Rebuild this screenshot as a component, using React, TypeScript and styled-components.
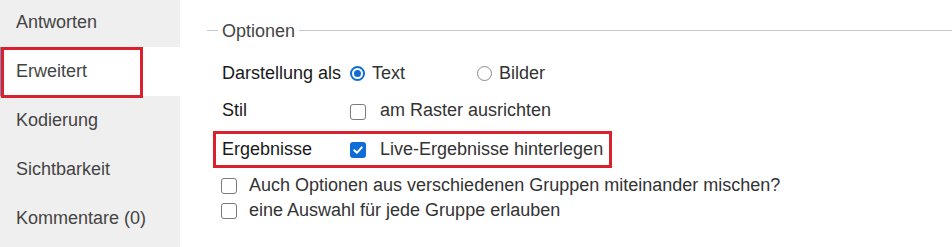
import React from "react";
import styled, { createGlobalStyle } from "styled-components";

const Global = createGlobalStyle`
  html, body { margin: 0; padding: 0; background: #fff; }
  body { font-family: "Liberation Sans", Arial, sans-serif; font-size: 18px; }
`;

const Page = styled.div`
  display: flex;
  width: 952px;
  height: 247px;
  overflow: hidden;
  background: #fff;
`;

const Sidebar = styled.nav`
  width: 180px;
  flex: none;
  background: #efefef;
  display: flex;
  flex-direction: column;
  margin-top: -2px;
  height: 250px;
`;

const NavItem = styled.div<{ $active?: boolean }>`
  position: relative;
  height: 49px;
  display: flex;
  align-items: center;
  padding-left: 16px;
  color: #444;
  font-size: 18px;
  background: ${(p) => (p.$active ? "#fff" : "transparent")};
  ${(p) =>
    p.$active &&
    `
    box-shadow: inset 1px 0 0 #8f86b8;
    &::after {
      content: "";
      position: absolute;
      left: 1px;
      top: 0;
      width: 136px;
      height: 45px;
      border: 3px solid #d8232f;
    }
  `}
`;

const Main = styled.main`
  flex: 1;
  padding: 18px 0 0 27px;
`;

const Fieldset = styled.fieldset`
  margin: 0;
  border: none;
  border-top: 1px solid #c8c8c8;
  padding: 13px 0 0 11px;
  min-width: 0;
`;

const Legend = styled.legend`
  padding: 3px 4px 0;
  color: #444;
  font-size: 18px;
`;

const Body = styled.div`
  padding-left: 4px;
`;

const Row = styled.div<{ $h: number }>`
  display: flex;
  align-items: center;
  height: ${(p) => p.$h}px;
`;

const Highlight = styled.div`
  box-sizing: border-box;
  display: flex;
  align-items: center;
  margin: 3px 0 0 -9px;
  padding-left: 6px;
  width: 399px;
  height: 37px;
  border: 3px solid #d8232f;
`;

const Label = styled.span`
  width: 128px;
  flex: none;
  color: #1a1a1a;
`;

const Option = styled.label<{ $w?: number; $gap: number }>`
  display: flex;
  align-items: center;
  gap: ${(p) => p.$gap}px;
  color: #333;
  ${(p) => (p.$w ? `width: ${p.$w}px;` : "")}
`;

const Radio = styled.span<{ $on?: boolean }>`
  box-sizing: border-box;
  width: 15px;
  height: 15px;
  border-radius: 50%;
  border: ${(p) => (p.$on ? "2px solid #0f6cd6" : "1px solid #8a8a8a")};
  display: flex;
  align-items: center;
  justify-content: center;
  flex: none;
  &::after {
    content: "";
    width: 7px;
    height: 7px;
    border-radius: 50%;
    background: ${(p) => (p.$on ? "#0f6cd6" : "transparent")};
  }
`;

const Box = styled.span<{ $on?: boolean; $dy?: number }>`
  box-sizing: border-box;
  width: 16px;
  height: 16px;
  border-radius: 3px;
  border: ${(p) => (p.$on ? "none" : "1.5px solid #7a7a7a")};
  background: ${(p) => (p.$on ? "#0f6cd6" : "#fff")};
  display: flex;
  align-items: center;
  justify-content: center;
  flex: none;
  margin-top: ${(p) => p.$dy ?? 0}px;
`;

const Check = () => (
  <svg width="12" height="12" viewBox="0 0 12 12">
    <path d="M2.3 6.3 L4.9 8.8 L9.8 3.4" fill="none" stroke="#fff" strokeWidth="2" strokeLinecap="round" strokeLinejoin="round" />
  </svg>
);

const Indent = styled.div`
  display: flex;
  flex-direction: column;
  margin-top: 5px;
`;

const SmallRow = styled.label`
  display: flex;
  align-items: center;
  gap: 12px;
  height: 25px;
  color: #333;
  margin-left: -1px;
`;

export default function App() {
  return (
    <>
      <Global />
      <Page>
        <Sidebar>
          <NavItem>Antworten</NavItem>
          <NavItem $active>Erweitert</NavItem>
          <NavItem>Kodierung</NavItem>
          <NavItem>Sichtbarkeit</NavItem>
          <NavItem>Kommentare (0)</NavItem>
        </Sidebar>
        <Main>
          <Fieldset>
            <Legend>Optionen</Legend>
            <Body>
              <Row $h={37}>
                <Label>Darstellung als</Label>
                <Option $w={127} $gap={7}>
                  <Radio $on />
                  Text
                </Option>
                <Option $gap={7}>
                  <Radio />
                  Bilder
                </Option>
              </Row>
              <Row $h={36}>
                <Label>Stil</Label>
                <Option $gap={14}>
                  <Box $dy={3} />
                  am Raster ausrichten
                </Option>
              </Row>
              <Highlight>
                <Label>Ergebnisse</Label>
                <Option $gap={14}>
                  <Box $on>
                    <Check />
                  </Box>
                  Live-Ergebnisse hinterlegen
                </Option>
              </Highlight>
              <Indent>
                <SmallRow>
                  <Box />
                  Auch Optionen aus verschiedenen Gruppen miteinander mischen?
                </SmallRow>
                <SmallRow>
                  <Box />
                  eine Auswahl für jede Gruppe erlauben
                </SmallRow>
              </Indent>
            </Body>
          </Fieldset>
        </Main>
      </Page>
    </>
  );
}
